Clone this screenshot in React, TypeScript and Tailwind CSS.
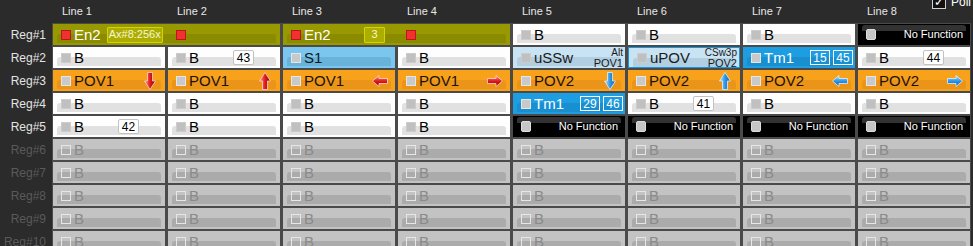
import type { ReactNode } from "react";

type Kind = "olive" | "white" | "orange" | "sky" | "pale" | "paleSel" | "blue" | "black" | "off";
type Tone = "red" | "grey" | "light" | "hollow" | "dark";

const skins: Record<Kind, { bg: string; band: string; text: string }> = {
  olive: { bg: "bg-[#989800]", band: "bg-[#8b8b00]", text: "text-white" },
  white: { bg: "bg-[#fefefe]", band: "bg-[#e1e1e1]", text: "text-black" },
  orange: { bg: "bg-[#f8a11b]", band: "bg-[#eb941a]", text: "text-[#1a1205]" },
  sky: { bg: "bg-[#7ac6ee]", band: "bg-[#69b2da]", text: "text-[#101820]" },
  pale: { bg: "bg-[#c8e3f3]", band: "bg-[#b2cfe1]", text: "text-[#1a1a1a]" },
  paleSel: { bg: "bg-[#c8e3f3] border border-[#1e94d8]", band: "bg-[#b2cfe1]", text: "text-[#1a1a1a]" },
  blue: { bg: "bg-[#1e9ee2]", band: "bg-[#1a8fd0]", text: "text-white" },
  black: { bg: "bg-black", band: "bg-[#323232]", text: "text-white" },
  off: { bg: "bg-[#c3c3c3]", band: "bg-[#ababab]", text: "text-[#8a8a8a]" },
};

const boxes: Record<Tone, string> = {
  red: "bg-[#f23030] border border-[#b81818]",
  grey: "bg-[#c0c0c0] border border-[#cccccc]",
  light: "bg-[#c9c9c9] border border-[#e6e6e6]",
  hollow: "border-[1.5px] border-[#e6e6e6]",
  dark: "bg-[#c6c6c6] border border-[#dddddd] rounded-[2px] h-[11px]",
};

const toneFor: Record<Kind, Tone> = {
  olive: "red",
  white: "grey",
  orange: "light",
  sky: "light",
  pale: "grey",
  paleSel: "grey",
  blue: "light",
  black: "dark",
  off: "hollow",
};

function Box({ tone }: { tone: Tone }) {
  return <span className={`h-[10px] w-[10px] flex-shrink-0 ${boxes[tone]}`} />;
}

function Cell({ kind, wide, children }: { kind: Kind; wide?: boolean; children: ReactNode }) {
  const s = skins[kind];
  return (
    <div className={`relative h-[21px] overflow-hidden ${wide ? "col-span-2" : ""} ${s.bg} ${s.text}`}>
      <div
        className={`absolute left-[4px] right-[4px] rounded-t-[3px] ${s.band} ${
          kind === "black" ? "top-[1px] h-[6px]" : "top-[10px] h-[9px]"
        }`}
      />
      <div className="relative flex h-full items-center pl-[8px]">{children}</div>
    </div>
  );
}

function Label({ text, w }: { text: string; w?: string }) {
  return <span className={`ml-[3px] text-[15px] leading-none ${w ?? ""}`}>{text}</span>;
}

function NumBadge({ n }: { n: string }) {
  return (
    <span className="flex h-[15px] w-[21px] items-center justify-center rounded-[2px] border border-[#c2c2c2] bg-white text-[12px] leading-none text-black">
      {n}
    </span>
  );
}

function LineBadge({ n }: { n: string }) {
  return (
    <span className="flex h-[15px] min-w-[20px] items-center justify-center border border-white px-[2px] text-[12px] leading-none text-white">
      {n}
    </span>
  );
}

function OliveBadge({ text, cls }: { text: string; cls?: string }) {
  return (
    <span
      className={`flex h-[16px] items-center justify-center rounded-[1px] border border-[#d4d400] bg-[#adad00] px-[1px] text-[11px] leading-none text-[#f6f6d8] ${cls ?? ""}`}
    >
      {text}
    </span>
  );
}

type Dir = "up" | "down" | "left" | "right";

function Arrow({ dir, color }: { dir: Dir; color: "red" | "blue" }) {
  const id = `${color}-${dir}`;
  const stops =
    color === "red" ? ["#ff9a9a", "#e01c1c", "#8a0000"] : ["#b8e2ff", "#2f96e6", "#0b5fb4"];
  const edge = color === "red" ? "#ffd0d0" : "#d8efff";
  const vertical = dir === "up" || dir === "down";
  const pts = {
    down: "3.5,0.5 8.5,0.5 8.5,9 11.5,9 6,17.5 0.5,9 3.5,9",
    up: "3.5,17.5 8.5,17.5 8.5,9 11.5,9 6,0.5 0.5,9 3.5,9",
    left: "0.5,6 7,0.5 7,3.5 15.5,3.5 15.5,8.5 7,8.5 7,11.5",
    right: "15.5,6 9,0.5 9,3.5 0.5,3.5 0.5,8.5 9,8.5 9,11.5",
  }[dir];
  return (
    <span className="ml-auto mr-[7px] flex w-[16px] justify-center">
      <svg width={vertical ? 12 : 16} height={vertical ? 18 : 12} viewBox={vertical ? "0 0 12 18" : "0 0 16 12"}>
        <defs>
          <linearGradient id={id} x1="0" y1="0" x2={vertical ? "1" : "0"} y2={vertical ? "0" : "1"}>
            <stop offset="0" stopColor={stops[0]} />
            <stop offset="0.5" stopColor={stops[1]} />
            <stop offset="1" stopColor={stops[2]} />
          </linearGradient>
        </defs>
        <polygon points={pts} fill={`url(#${id})`} stroke={edge} strokeWidth="0.8" />
      </svg>
    </span>
  );
}

function Stack({ top, bottom }: { top: string; bottom: string }) {
  return (
    <span className="ml-auto mr-[2px] flex flex-col items-end text-[10px] leading-[10px] text-[#1a1a1a]">
      <span>{top}</span>
      <span className="text-[11px]">{bottom}</span>
    </span>
  );
}

function NoFunction() {
  return (
    <Cell kind="black">
      <Box tone="dark" />
      <span className="ml-auto mr-[7px] text-[11px] leading-none">No Function</span>
    </Cell>
  );
}

function Plain({ kind = "white", n }: { kind?: Kind; n?: string }) {
  return (
    <Cell kind={kind}>
      <Box tone={toneFor[kind]} />
      <Label text="B" w={n ? "w-[44px]" : ""} />
      {n && <NumBadge n={n} />}
    </Cell>
  );
}

function Timer({ a, b }: { a: string; b: string }) {
  return (
    <Cell kind="blue">
      <Box tone="light" />
      <Label text="Tm1" w="w-[46px]" />
      <div className="flex gap-[3px]">
        <LineBadge n={a} />
        <LineBadge n={b} />
      </div>
    </Cell>
  );
}

function Pov({ n, dir }: { n: string; dir: Dir }) {
  return (
    <Cell kind="orange">
      <Box tone="light" />
      <Label text={`POV${n}`} />
      <Arrow dir={dir} color={n === "1" ? "red" : "blue"} />
    </Cell>
  );
}

export default function App() {
  const regs = Array.from({ length: 10 }, (_, i) => i + 1);
  return (
    <div className="relative h-[246px] w-[973px] overflow-hidden bg-[#2b2b2b] font-['Liberation_Sans',Arial,sans-serif]">
      {/* Poll toggle, mostly scrolled off the top */}
      <div className="absolute right-[2px] top-[-7px] flex items-center gap-[5px] text-[12px] text-white">
        <span className="flex h-[14px] w-[14px] items-center justify-center border border-[#d0d0d0] bg-[#111] text-[12px] leading-none">
          ✓
        </span>
        <span>Poll</span>
      </div>

      <div className="flex h-[23px] pl-[53px]">
        {Array.from({ length: 8 }, (_, i) => (
          <div key={i} className="flex w-[115px] items-center pl-[9px] text-[11px] text-[#e8e8e8]">
            Line {i + 1}
          </div>
        ))}
      </div>

      <div className="flex">
        <div className="flex w-[52px] flex-col gap-[2px] pt-[1px]">
          {regs.map((r) => (
            <div
              key={r}
              className={`flex h-[21px] items-center justify-end pr-[6px] text-[12px] ${
                r <= 5 ? "text-[#e4e4e4]" : "text-[#5a5a5a]"
              }`}
            >
              Reg#{r}
            </div>
          ))}
        </div>

        <div className="grid grid-cols-[repeat(8,112px)] gap-x-[3px] gap-y-[2px] bg-[#4a4a4a] p-[1px]">
          {/* Reg#1 */}
          <Cell kind="olive" wide>
            <div className="flex w-[115px] items-center">
              <Box tone="red" />
              <Label text="En2" />
              <OliveBadge text="Ax#8:256x" cls="ml-[6px]" />
            </div>
            <Box tone="red" />
          </Cell>
          <Cell kind="olive" wide>
            <div className="flex w-[115px] items-center">
              <Box tone="red" />
              <Label text="En2" w="w-[60px]" />
              <OliveBadge text="3" cls="w-[21px]" />
            </div>
            <Box tone="red" />
          </Cell>
          <Plain />
          <Plain />
          <Plain />
          <NoFunction />

          {/* Reg#2 */}
          <Plain />
          <Plain n="43" />
          <Cell kind="sky">
            <Box tone="light" />
            <Label text="S1" />
          </Cell>
          <Plain />
          <Cell kind="pale">
            <Box tone="grey" />
            <Label text="uSSw" />
            <Stack top="Alt" bottom="POV1" />
          </Cell>
          <Cell kind="paleSel">
            <Box tone="grey" />
            <Label text="uPOV" />
            <Stack top="CSw3p" bottom="POV2" />
          </Cell>
          <Timer a="15" b="45" />
          <Plain n="44" />

          {/* Reg#3 */}
          <Pov n="1" dir="down" />
          <Pov n="1" dir="up" />
          <Pov n="1" dir="left" />
          <Pov n="1" dir="right" />
          <Pov n="2" dir="down" />
          <Pov n="2" dir="up" />
          <Pov n="2" dir="left" />
          <Pov n="2" dir="right" />

          {/* Reg#4 */}
          <Plain />
          <Plain />
          <Plain />
          <Plain />
          <Timer a="29" b="46" />
          <Plain n="41" />
          <Plain />
          <Plain />

          {/* Reg#5 */}
          <Plain n="42" />
          <Plain />
          <Plain />
          <Plain />
          <NoFunction />
          <NoFunction />
          <NoFunction />
          <NoFunction />

          {/* Reg#6 - Reg#10 unused */}
          {Array.from({ length: 40 }, (_, i) => (
            <Plain key={i} kind="off" />
          ))}
        </div>
      </div>
    </div>
  );
}
